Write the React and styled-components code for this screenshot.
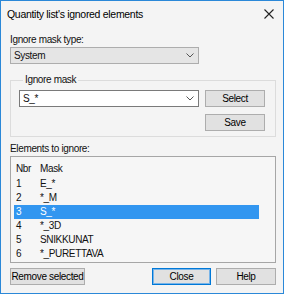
import React from "react";
import styled, { createGlobalStyle } from "styled-components";

const GlobalStyle = createGlobalStyle`
  html, body {
    margin: 0;
    padding: 0;
    background: #fff;
  }
  body {
    font-family: "Liberation Sans", Arial, sans-serif;
    font-size: 10px;
    letter-spacing: -0.35px;
    color: #111;
  }
`;

const Window = styled.div`
  width: 284px;
  height: 294px;
  box-sizing: border-box;
  border: 1px solid #2b88d8;
  background: #f4f4f4;
  display: flex;
  flex-direction: column;
`;

const TitleBar = styled.div`
  height: 26px;
  display: flex;
  align-items: center;
  justify-content: space-between;
  padding: 0 9px 0 6px;
  font-size: 10.5px;
  letter-spacing: -0.3px;
  color: #000;
`;

const Body = styled.div`
  display: flex;
  flex-direction: column;
  padding: 0 7px 0 9px;
`;

const Label = styled.div`
  line-height: 14px;
  margin-top: ${(p) => p.$top || 0}px;
`;

const Combo = styled.div`
  box-sizing: border-box;
  width: ${(p) => p.$width}px;
  height: 17px;
  border: 1px solid ${(p) => (p.$editable ? "#7a7a7a" : "#adadad")};
  background: ${(p) => (p.$editable ? "#fff" : "#e5e5e5")};
  display: flex;
  align-items: center;
  justify-content: space-between;
  padding: 0 4px 0 3px;
`;

const GroupBox = styled.fieldset`
  margin: 9px 0 0;
  padding: 3px 10px 5px 8px;
  border: 1px solid #dcdcdc;
  min-width: 0;
  display: grid;
  grid-template-columns: 180px 60px;
  column-gap: 6px;
  row-gap: 7px;
`;

const Legend = styled.legend`
  margin-left: 4px;
  padding: 0 2px;
  line-height: 14px;
`;

const Button = styled.button`
  box-sizing: border-box;
  width: ${(p) => p.$width}px;
  height: 17px;
  padding: 0;
  font: inherit;
  letter-spacing: inherit;
  white-space: nowrap;
  color: #000;
  background: #e1e1e1;
  border: 1px solid ${(p) => (p.$default ? "#0078d7" : "#adadad")};
  box-shadow: ${(p) => (p.$default ? "inset 0 0 0 1px #78b4e8" : "none")};
  grid-column: 2;
  margin-left: ${(p) => (p.$push ? "auto" : "0")};
`;

const List = styled.div`
  box-sizing: border-box;
  height: 107px;
  border: 1px solid #a6a6a6;
  background: #f6f6f6;
  padding: 5px 0 0 3px;
`;

const Row = styled.div`
  display: grid;
  grid-template-columns: 24px 1fr;
  width: 245px;
  height: ${(p) => (p.$header ? 15 : 14)}px;
  line-height: 14px;
  padding-left: 2px;
  box-sizing: border-box;
  background: ${(p) => (p.$selected ? "#3296f0" : "transparent")};
  color: ${(p) => (p.$selected ? "#fff" : "#111")};
`;

const Footer = styled.div`
  display: flex;
  margin-top: 5px;
  gap: 5px;
`;

const Chevron = () => (
  <svg width="8" height="5" viewBox="0 0 8 5">
    <path d="M0.5 0.5 L4 4 L7.5 0.5" fill="none" stroke="#555" strokeWidth="1" />
  </svg>
);

const CloseIcon = () => (
  <svg width="10" height="10" viewBox="0 0 10 10">
    <path d="M0.5 0.5 L9.5 9.5 M9.5 0.5 L0.5 9.5" stroke="#222" strokeWidth="1.1" />
  </svg>
);

const masks = ["E_*", "*_M", "S_*", "*_3D", "SNIKKUNAT", "*_PURETTAVA"];

export default function App() {
  return (
    <>
      <GlobalStyle />
      <Window>
        <TitleBar>
          <span>Quantity list's ignored elements</span>
          <CloseIcon />
        </TitleBar>
        <Body>
          <Label $top={6}>Ignore mask type:</Label>
          <Combo $width={189}>
            <span>System</span>
            <Chevron />
          </Combo>
          <GroupBox>
            <Legend>Ignore mask</Legend>
            <Combo $width={180} $editable>
              <span>S_*</span>
              <Chevron />
            </Combo>
            <Button $width={60}>Select</Button>
            <Button $width={60}>Save</Button>
          </GroupBox>
          <Label $top={5}>Elements to ignore:</Label>
          <List>
            <Row $header>
              <span>Nbr</span>
              <span>Mask</span>
            </Row>
            {masks.map((m, i) => (
              <Row key={m} $selected={i === 2}>
                <span>{i + 1}</span>
                <span>{m}</span>
              </Row>
            ))}
          </List>
          <Footer>
            <Button $width={75}>Remove selected</Button>
            <Button $width={59} $default $push>
              Close
            </Button>
            <Button $width={60}>Help</Button>
          </Footer>
        </Body>
      </Window>
    </>
  );
}
